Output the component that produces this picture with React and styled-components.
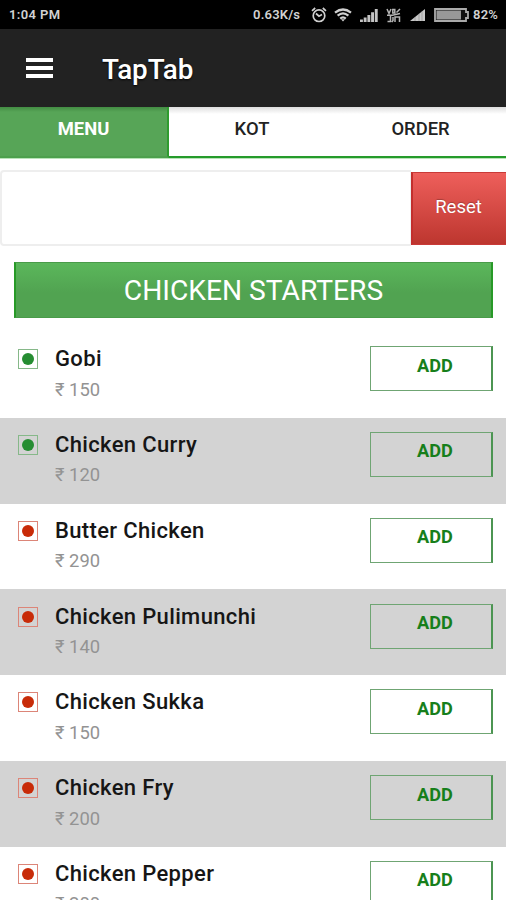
import styled, { createGlobalStyle } from "styled-components"

const GlobalStyle = createGlobalStyle`
  * {
    box-sizing: border-box;
  }

  body {
    margin: 0;
    background: #fff;
    font-family: Roboto, "Noto Sans", sans-serif;
  }
`

const Screen = styled.div`
  width: 100%;
  height: 900px;
  overflow: hidden;
  background: #fff;
`

const StatusBar = styled.div`
  height: 29px;
  padding: 1px 8px 0 9px;
  background: #000;
  color: #d2d2d2;
  display: flex;
  align-items: center;
  justify-content: space-between;
  font-size: 13px;
  font-weight: 600;
  line-height: 28px;
`

const ClockText = styled.span`
  letter-spacing: 0.4px;
`

const StatusIcons = styled.div`
  display: flex;
  align-items: center;

  svg {
    display: block;
    flex: none;
  }
`

const StatusText = styled.span`
  width: ${(props) => props.$width}px;
  letter-spacing: 0.2px;
  white-space: nowrap;
`

const StatusGap = styled.span`
  width: ${(props) => props.$width}px;
`

const Header = styled.header`
  height: 78px;
  padding-left: 26px;
  display: flex;
  align-items: center;
  gap: 49px;
  background: #222;
  color: #fff;
`

const MenuButton = styled.button`
  width: 27px;
  height: 20px;
  padding: 0;
  border: none;
  background: none;
  display: flex;
  flex-direction: column;
  justify-content: space-between;

  span {
    width: 27px;
    height: 4px;
    background: #fff;
  }
`

const Title = styled.h1`
  margin: 3px 0 0;
  font-size: 27.8px;
  font-weight: 500;
  line-height: 32px;
  text-shadow: 0 1px 2px #000;
`

const Tabs = styled.nav`
  height: 52px;
  display: grid;
  grid-template-columns: 169px 167px 1fr;
  background: linear-gradient(#dedede, #fff 7px);
  border-bottom: 1px solid #b9e3b9;
`

const Tab = styled.button`
  padding: 0 ${(props) => (props.$active ? 0 : 1)}px 5px 0;
  border: none;
  border-bottom: 2px solid ${(props) => (props.$active ? "#4da04d" : "#259b2b")};
  border-right: ${(props) => (props.$active ? "2px solid #2f9c2f" : "none")};
  background: ${(props) => (props.$active ? "linear-gradient(#438c43, #57a557 5px)" : "transparent")};
  color: ${(props) => (props.$active ? "#fff" : "#222")};
  font-family: inherit;
  font-size: 18.4px;
  font-weight: ${(props) => (props.$active ? 700 : 500)};
  line-height: 22px;
`

const SearchRow = styled.div`
  margin-top: 11px;
  height: 76px;
  display: flex;
  align-items: center;
`

const SearchInput = styled.input`
  width: 411px;
  height: 76px;
  padding: 0 16px;
  border: 2px solid #eee;
  border-right: 1px solid #eee;
  border-radius: 4px 0 0 4px;
  background: #fff;
  font-family: inherit;
  font-size: 20px;
`

const ResetButton = styled.button`
  flex: 1;
  height: 73px;
  padding: 0 2px 3px 0;
  border: 1px solid #c93a38;
  border-right: none;
  border-left: 2px solid #c22f2d;
  background: linear-gradient(#ee5f5b, #bd362f);
  color: #fff;
  font-family: inherit;
  font-size: 18.5px;
  text-shadow: 0 -1px 1px rgba(0, 0, 0, 0.25);
`

const CategoryTitle = styled.h2`
  margin: 16px 13px 14px 14px;
  height: 56px;
  border: 1px solid #499b49;
  border-right: 2px solid #279a27;
  border-left: 2px solid #279a27;
  background: linear-gradient(#5bb75b, #51a351 55%, #51a351);
  color: #fff;
  text-align: center;
  font-size: 28.2px;
  font-weight: 400;
  line-height: 55px;
`

const MenuRow = styled.div`
  height: 85.8px;
  padding: 14.2px 13px 0 18px;
  display: flex;
  align-items: flex-start;
  background: ${(props) => (props.$shaded ? "#d3d3d3" : "#fff")};
`

const FoodMark = styled.span`
  width: 20px;
  height: 20px;
  margin: 3px 17px 0 0;
  border: 1px solid ${(props) => (props.$veg ? "#86b889" : "#dc8578")};
  display: flex;
  align-items: center;
  justify-content: center;

  &::before {
    content: "";
    width: 12px;
    height: 12px;
    border-radius: 50%;
    background: ${(props) => (props.$veg ? "#268d32" : "#c82b08")};
  }
`

const ItemInfo = styled.div`
  flex: 1;
`

const ItemName = styled.div`
  color: #161616;
  font-size: 22px;
  font-weight: 500;
  letter-spacing: 0.35px;
  line-height: 25px;
`

const ItemPrice = styled.div`
  margin-top: 6.4px;
  color: #939393;
  font-size: 18.4px;
  font-weight: 400;
  line-height: 24px;
`

const AddButton = styled.button`
  width: 123px;
  height: 45px;
  padding: 0 0 7px 8px;
  border: 1px solid #6fa573;
  border-right: 2px solid #4c9552;
  background: transparent;
  color: #177f1b;
  font-family: inherit;
  font-size: 18.2px;
  font-weight: 700;
`

const menuItems = [
  { name: "Gobi", price: 150, veg: true },
  { name: "Chicken Curry", price: 120, veg: true },
  { name: "Butter Chicken", price: 290, veg: false },
  { name: "Chicken Pulimunchi", price: 140, veg: false },
  { name: "Chicken Sukka", price: 150, veg: false },
  { name: "Chicken Fry", price: 200, veg: false },
  { name: "Chicken Pepper", price: 200, veg: false },
]

function AlarmIcon() {
  return (
    <svg width="16" height="16" viewBox="0 0 16 16" fill="none" stroke="#d0d0d0" strokeWidth="1.7">
      <circle cx="8" cy="8.7" r="5.8" />
      <path d="M1 3.8 4.2 1M15 3.8 11.8 1M5 6.5l3 2.7 3-1.6" />
    </svg>
  )
}

function WifiIcon() {
  return (
    <svg width="18" height="14" viewBox="0 0 18 14" fill="none" stroke="#d0d0d0" strokeWidth="2.2">
      <path d="M1 4.7Q9-1.7 17 4.7M3.6 7.7Q9 3.2 14.4 7.7M6.2 10.6Q9 8.2 11.8 10.6" />
      <path d="M7 11.2h4L9 13.6z" fill="#d0d0d0" stroke="none" />
    </svg>
  )
}

function SignalBars() {
  return (
    <svg width="18" height="13" viewBox="0 0 18 13" fill="#c4c4c4">
      <path d="M0 10.5h2.9V13H0zM3.7 8.5h2.9V13H3.7zM7.4 6h2.9v7H7.4zM11.1 3.2H14V13h-2.9zM14.8 0h2.9v13h-2.9z" />
    </svg>
  )
}

function VolteIcon() {
  return (
    <svg width="15" height="15" viewBox="0 0 15 15" fill="none" stroke="#b4b4b4" strokeWidth="1.5">
      <path d="M1 1l2 4.5L5 1M6.8 1.5h2v3.5h-2zM10.5 4.5 14 1M1 7.3h5.5L14 5.5M4.5 7.5v6H1.5M9 14V9h4.5v5M7 9v3.5L5.8 14" />
    </svg>
  )
}

function SignalTriangle() {
  return (
    <svg width="16" height="12" viewBox="0 0 16 12">
      <path d="M0 12 15 0v12z" fill="#c7c7c7" />
      <path d="M5 8v4M9 4.8V12M12 2.4V12" stroke="#8b8b8b" strokeWidth=".6" />
    </svg>
  )
}

function BatteryIcon() {
  return (
    <svg width="35" height="14" viewBox="0 0 35 14">
      <path d="M1 1h31v3h2v6h-2v3H1z" fill="#111" stroke="#aaa" strokeWidth="1.8" />
      <path d="M2.5 2.5h24.5v9H2.5z" fill="#989898" />
    </svg>
  )
}

function App() {
  return (
    <>
      <GlobalStyle />
      <Screen>
        <StatusBar>
          <ClockText>1:04 PM</ClockText>
          <StatusIcons>
            <StatusText $width={58}>0.63K/s</StatusText>
            <AlarmIcon />
            <StatusGap $width={7} />
            <WifiIcon />
            <StatusGap $width={8} />
            <SignalBars />
            <StatusGap $width={8} />
            <VolteIcon />
            <StatusGap $width={9} />
            <SignalTriangle />
            <StatusGap $width={8} />
            <BatteryIcon />
            <StatusGap $width={4} />
            <StatusText $width={25}>82%</StatusText>
          </StatusIcons>
        </StatusBar>

        <Header>
          <MenuButton aria-label="Open menu">
            <span />
            <span />
            <span />
          </MenuButton>
          <Title>TapTab</Title>
        </Header>

        <Tabs>
          <Tab $active>MENU</Tab>
          <Tab>KOT</Tab>
          <Tab>ORDER</Tab>
        </Tabs>

        <SearchRow>
          <SearchInput aria-label="Search menu" />
          <ResetButton>Reset</ResetButton>
        </SearchRow>

        <CategoryTitle>CHICKEN STARTERS</CategoryTitle>

        {menuItems.map((item, index) => (
          <MenuRow key={item.name} $shaded={index % 2 === 1}>
            <FoodMark $veg={item.veg} />
            <ItemInfo>
              <ItemName>{item.name}</ItemName>
              <ItemPrice>₹ {item.price}</ItemPrice>
            </ItemInfo>
            <AddButton>ADD</AddButton>
          </MenuRow>
        ))}
      </Screen>
    </>
  )
}

export default App
